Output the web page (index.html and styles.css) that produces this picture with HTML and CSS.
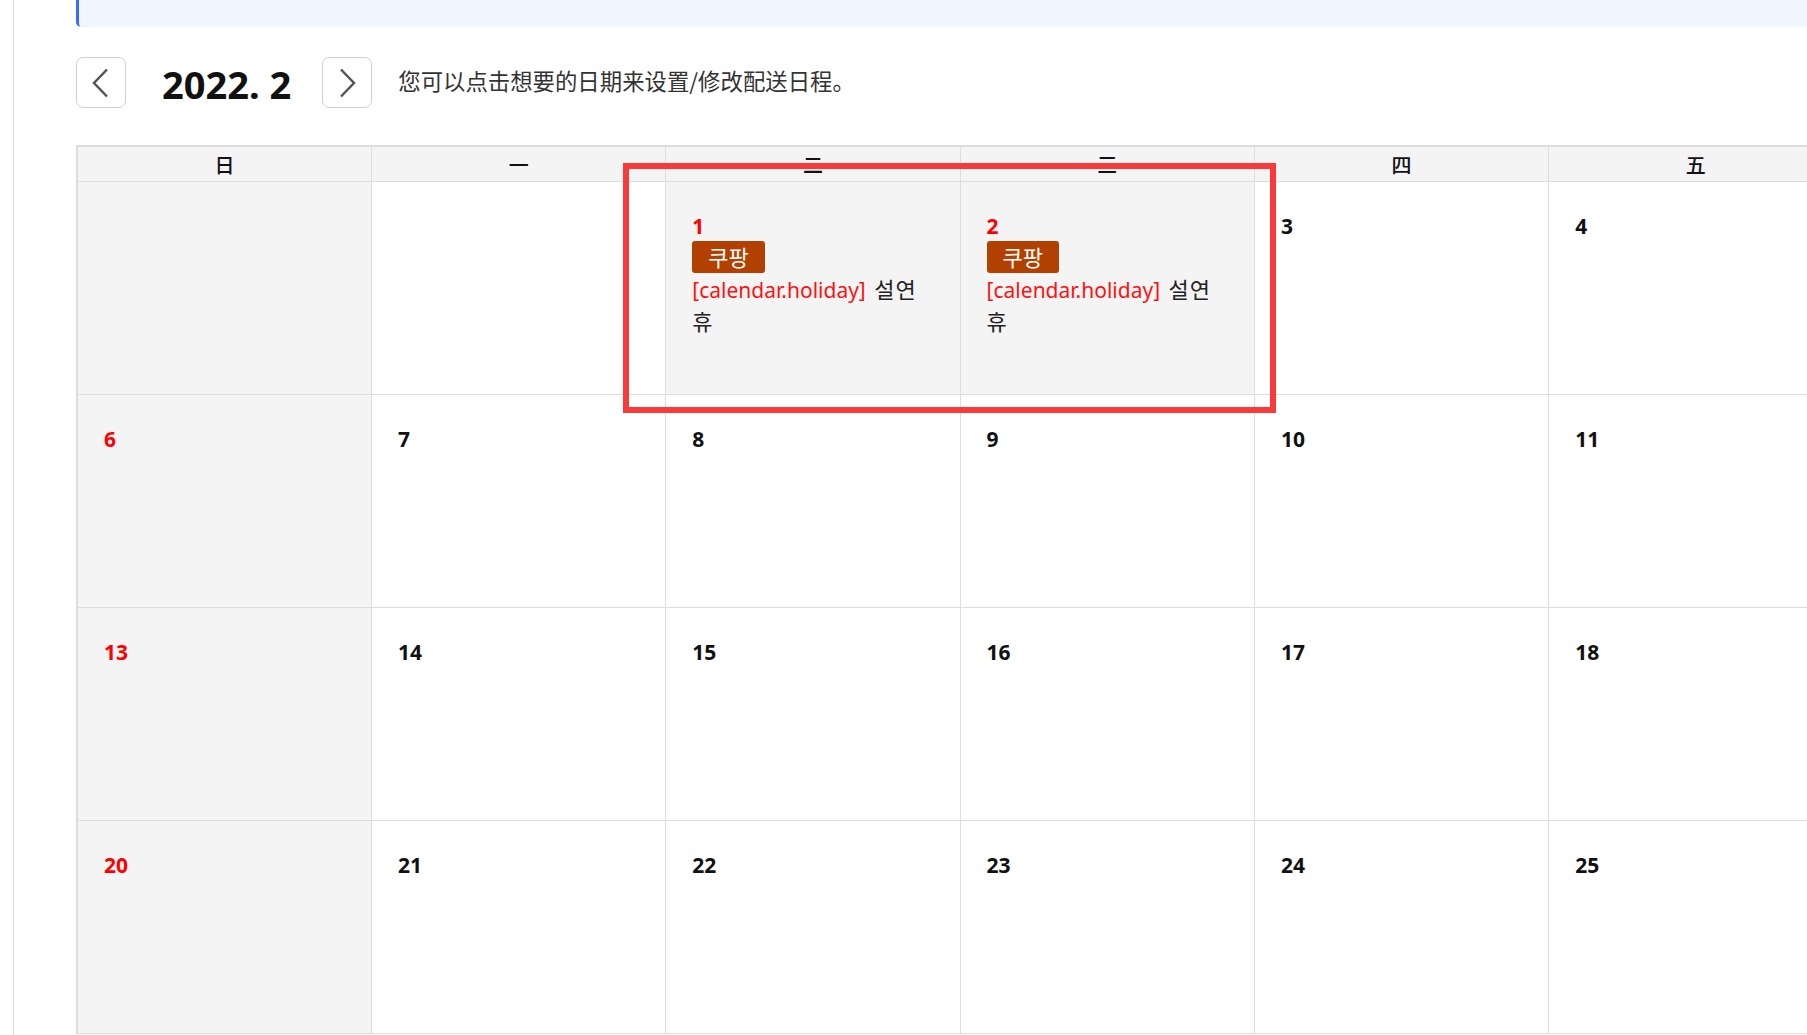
FILE: index.html
```html
<!DOCTYPE html>
<html lang="zh-CN">
<head>
    <meta charset="UTF-8">
    <meta name="viewport" content="width=device-width, initial-scale=1.0">
    <title>配送日程</title>
    <link rel="stylesheet" href="styles.css">
</head>
<body>
    <div class="page">
        <aside class="sidebar"></aside>

        <main class="main">
            <div class="notice"></div>

            <!-- 月份切换 -->
            <div class="toolbar">
                <button class="nav-btn" aria-label="上个月">
                    <svg width="20" height="30" viewBox="0 0 20 30"><polyline points="16,1.5 3,15 16,28.5"/></svg>
                </button>
                <h1 class="month-title">2022. 2</h1>
                <button class="nav-btn" aria-label="下个月">
                    <svg width="20" height="30" viewBox="0 0 20 30"><polyline points="4,1.5 17,15 4,28.5"/></svg>
                </button>
                <p class="tip">您可以点击想要的日期来设置/修改配送日程。</p>
            </div>

            <!-- 日历 -->
            <div class="calendar">
                <div class="weekday">日</div>
                <div class="weekday">一</div>
                <div class="weekday">二</div>
                <div class="weekday">三</div>
                <div class="weekday">四</div>
                <div class="weekday">五</div>
                <div class="weekday">六</div>

                <div class="day grey"></div>
                <div class="day"></div>
                <div class="day grey">
                    <span class="date red">1</span>
                    <span class="badge">쿠팡</span>
                    <p class="event"><span class="event-tag">[calendar.holiday]</span> <span class="event-name">설연휴</span></p>
                </div>
                <div class="day grey">
                    <span class="date red">2</span>
                    <span class="badge">쿠팡</span>
                    <p class="event"><span class="event-tag">[calendar.holiday]</span> <span class="event-name">설연휴</span></p>
                </div>
                <div class="day"><span class="date">3</span></div>
                <div class="day"><span class="date">4</span></div>
                <div class="day"><span class="date">5</span></div>

                <div class="day grey"><span class="date red">6</span></div>
                <div class="day"><span class="date">7</span></div>
                <div class="day"><span class="date">8</span></div>
                <div class="day"><span class="date">9</span></div>
                <div class="day"><span class="date">10</span></div>
                <div class="day"><span class="date">11</span></div>
                <div class="day"><span class="date">12</span></div>

                <div class="day grey"><span class="date red">13</span></div>
                <div class="day"><span class="date">14</span></div>
                <div class="day"><span class="date">15</span></div>
                <div class="day"><span class="date">16</span></div>
                <div class="day"><span class="date">17</span></div>
                <div class="day"><span class="date">18</span></div>
                <div class="day"><span class="date">19</span></div>

                <div class="day grey"><span class="date red">20</span></div>
                <div class="day"><span class="date">21</span></div>
                <div class="day"><span class="date">22</span></div>
                <div class="day"><span class="date">23</span></div>
                <div class="day"><span class="date">24</span></div>
                <div class="day"><span class="date">25</span></div>
                <div class="day"><span class="date">26</span></div>

                <!-- 标注框 -->
                <div class="highlight-box"></div>
            </div>
        </main>
    </div>
</body>
</html>
```

FILE: styles.css
```css
* {
    margin: 0;
    padding: 0;
    box-sizing: border-box;
}

body {
    font-family: "Noto Sans", "Noto Sans CJK KR", sans-serif;
    color: #111;
    background: #fff;
}

.page {
    display: flex;
    height: 100vh;
    overflow: hidden;
}

.sidebar {
    width: 14px;
    flex-shrink: 0;
    border-right: 1px solid #d9d9d9;
}

.main {
    flex: 1;
    min-width: 0;
    padding-left: 62px;
    overflow: hidden;
}

.notice {
    height: 27px;
    background: #f0f5ff;
    border-left: 3px solid #3a6df5;
    border-radius: 0 0 0 5px;
}

.toolbar {
    display: flex;
    align-items: center;
    height: 51px;
    margin-top: 30px;
}

.nav-btn {
    width: 50px;
    height: 51px;
    display: flex;
    align-items: center;
    justify-content: center;
    background: #fff;
    border: 1px solid #d0d0d0;
    border-radius: 7px;
    cursor: pointer;
}

.nav-btn polyline {
    fill: none;
    stroke: #555;
    stroke-width: 2.5;
}

.month-title {
    margin: 0 31px 0 36px;
    padding-top: 4px;
    font-size: 38px;
    font-weight: 700;
    line-height: 1.2;
    color: #111;
}

.tip {
    margin-left: 26px;
    padding-bottom: 5px;
    font-family: "Noto Sans CJK SC", sans-serif;
    font-size: 22.4px;
    color: #333;
}

.calendar {
    position: relative;
    display: grid;
    grid-template-columns: 294px repeat(6, 294.3px);
    grid-template-rows: 35px repeat(4, 213px);
    width: max-content;
    margin-top: 37px;
    border-top: 2px solid #ddd;
    border-left: 2px solid #ddd;
}

.weekday {
    display: flex;
    align-items: center;
    justify-content: center;
    background: #f4f4f4;
    border-right: 1px solid #ddd;
    border-bottom: 1px solid #ddd;
    font-family: "Noto Sans CJK SC", sans-serif;
    font-size: 20px;
    font-weight: 500;
}

.day {
    display: flex;
    flex-direction: column;
    align-items: flex-start;
    padding: 32px 26px 0;
    border-right: 1px solid #ddd;
    border-bottom: 1px solid #ddd;
}

.day.grey {
    background: #f4f4f4;
}

.date {
    font-size: 21px;
    font-weight: 700;
    line-height: 24px;
    color: #111;
}

.date.red {
    color: #ff0000;
}

.badge {
    margin-top: 3px;
    height: 32px;
    padding: 0 16px;
    background: #b24000;
    border-radius: 3px;
    color: #fff;
    font-family: "Noto Sans CJK KR", sans-serif;
    font-size: 22px;
    line-height: 31px;
}

.event {
    max-width: 238px;
    margin-top: 1px;
    font-size: 21px;
    line-height: 32px;
    color: #222;
}

.event-tag {
    color: #ff1010;
}

.event-name {
    margin-left: 3px;
    font-family: "Noto Sans CJK KR", sans-serif;
    font-size: 22px;
    line-height: 1;
    letter-spacing: 1px;
}

.highlight-box {
    position: absolute;
    left: 545px;
    top: 16px;
    width: 653px;
    height: 250px;
    border: 6px solid #fa3a3a;
    pointer-events: none;
}
```
